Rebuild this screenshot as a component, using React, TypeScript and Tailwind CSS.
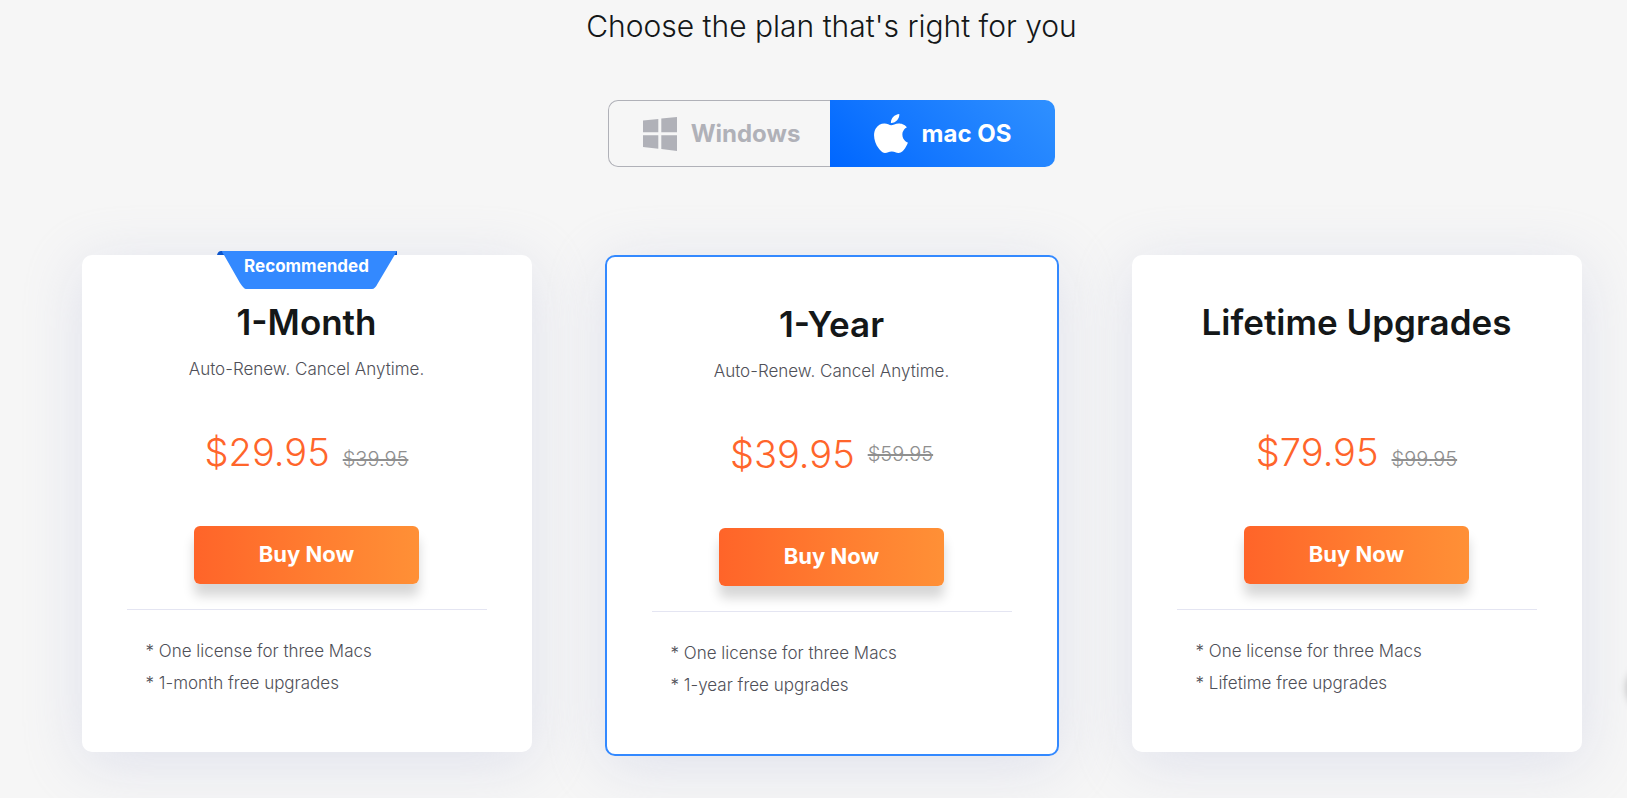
import { useState } from "react";

type Plan = {
  name: string;
  note?: string;
  price: string;
  oldPrice: string;
  perks: string[];
  recommended?: boolean;
  highlighted?: boolean;
};

const plans: Plan[] = [
  {
    name: "1-Month",
    note: "Auto-Renew. Cancel Anytime.",
    price: "$29.95",
    oldPrice: "$39.95",
    perks: ["* One license for three Macs", "* 1-month free upgrades"],
    recommended: true,
  },
  {
    name: "1-Year",
    note: "Auto-Renew. Cancel Anytime.",
    price: "$39.95",
    oldPrice: "$59.95",
    perks: ["* One license for three Macs", "* 1-year free upgrades"],
    highlighted: true,
  },
  {
    name: "Lifetime Upgrades",
    price: "$79.95",
    oldPrice: "$99.95",
    perks: ["* One license for three Macs", "* Lifetime free upgrades"],
  },
];

function WindowsIcon() {
  return (
    <svg viewBox="0 0 34 34" className="h-[34px] w-[34px]" fill="currentColor" aria-hidden="true">
      <path d="M0 3.6 15.3 1.9V15.2H0zM18.3 1.6 34 0V15.2H18.3zM0 18.2H15.3V31.8L0 30zM18.3 18.2H34V34L18.3 32.1z" />
    </svg>
  );
}

function AppleIcon() {
  return (
    <svg viewBox="2.2 0 19.6 24" className="h-[39px] w-[34px]" preserveAspectRatio="none" fill="currentColor" aria-hidden="true">
      <path d="M12.152 6.896c-.948 0-2.415-1.078-3.96-1.04-2.04.027-3.91 1.183-4.961 3.014-2.117 3.675-.546 9.103 1.519 12.09 1.013 1.454 2.208 3.09 3.792 3.039 1.52-.065 2.09-.987 3.935-.987 1.831 0 2.35.987 3.96.948 1.637-.026 2.676-1.48 3.676-2.948 1.156-1.688 1.636-3.325 1.662-3.415-.039-.013-3.182-1.221-3.22-4.857-.026-3.04 2.48-4.494 2.597-4.559-1.429-2.09-3.623-2.324-4.39-2.376-2-.156-3.675 1.09-4.61 1.09zM15.53 3.83c.843-1.012 1.4-2.427 1.245-3.83-1.207.052-2.662.805-3.532 1.818-.78.896-1.454 2.338-1.273 3.714 1.338.104 2.715-.688 3.559-1.701" />
    </svg>
  );
}

function Ribbon() {
  return (
    <div className="absolute -top-1 left-1/2 h-[38px] w-[180px] -translate-x-1/2">
      <svg viewBox="0 0 180 38" className="absolute inset-0 h-full w-full" aria-hidden="true">
        <path d="M0 4Q1 0 4 0H10V4zM172 0H180V4H172z" fill="#0b55cc" />
        <path d="M5 0H180L161 32Q158 38 155 38H29Q27 38 23 32L7 4Q5 2 5 0z" fill="#3389ff" />
        <path d="M177.5 4H180V0z" fill="#0b55cc" />
      </svg>
      <span className="relative block text-center text-[17px] leading-[30px] font-bold text-white">Recommended</span>
    </div>
  );
}

function PlanCard({ plan }: { plan: Plan }) {
  return (
    <article
      className={
        "relative flex flex-col items-center rounded-[10px] bg-white pt-[45px] pb-[53px] shadow-[0_10px_60px_rgba(195,200,225,0.45)] " +
        (plan.highlighted ? "w-[454px] border-2 border-[#3389ff]" : "w-[450px]")
      }
    >
      {plan.recommended && <Ribbon />}
      <h2 className="text-[35px] leading-[44px] font-semibold text-[#141718]">{plan.name}</h2>
      <p className="mt-[13px] h-6 text-[17px] leading-6 font-light text-[#4f5058]">{plan.note}</p>
      <div className={"mt-[47px] flex gap-[13px] " + (plan.highlighted ? "items-center" : "items-baseline")}>
        <span className="text-[38px] leading-[48px] font-light text-[#ff652b]">{plan.price}</span>
        <s className="text-[20px] leading-6 font-light text-[#8f8f8f]">{plan.oldPrice}</s>
      </div>
      <button
        type="button"
        className="mt-[50px] h-[58px] w-[225px] cursor-pointer rounded-md bg-linear-to-r from-[#ff6429] to-[#ff9036] pb-0.5 text-[22px] leading-7 font-bold text-white shadow-[0_12px_12px_rgba(0,0,0,0.16)]"
      >
        Buy Now
      </button>
      <div className="mt-[25px] w-[360px] border-t border-[#e4e5f2] px-[19px] pt-[25px]">
        <ul className="text-[17px] leading-8 font-light text-[#4f5058]">
          {plan.perks.map((perk) => (
            <li key={perk}>{perk}</li>
          ))}
        </ul>
      </div>
    </article>
  );
}

export default function App() {
  const [platform, setPlatform] = useState("mac");
  const active = "bg-linear-45 from-[#0066ff] to-[#2f90ff] text-white";
  const idle = "border border-[#b0b1b8] text-[#b0b1b8]";

  return (
    <main className="relative flex min-h-screen flex-col items-center overflow-hidden bg-[#f6f6f6] pt-[6px] pr-2 pb-10 pl-11 font-['Inter','Noto_Sans',sans-serif]">
      <h1 className="text-[30px] leading-10 font-light text-[#141718]">Choose the plan that's right for you</h1>

      <div className="mt-[54px] flex h-[67px]">
        <button
          type="button"
          aria-pressed={platform === "windows"}
          onClick={() => setPlatform("windows")}
          className={
            "flex w-[222px] cursor-pointer items-center justify-center gap-[14px] rounded-l-[10px] pl-1 text-[24px] leading-8 font-bold " +
            (platform === "windows" ? active : idle + " border-r-0")
          }
        >
          <WindowsIcon />
          Windows
        </button>
        <button
          type="button"
          aria-pressed={platform === "mac"}
          onClick={() => setPlatform("mac")}
          className={
            "flex w-[225px] cursor-pointer items-center justify-center gap-[14px] rounded-r-[10px] text-[24px] leading-8 font-bold " +
            (platform === "mac" ? active : idle + " border-l-0")
          }
        >
          <AppleIcon />
          mac OS
        </button>
      </div>

      <section className="mt-[88px] grid w-full grid-cols-3 items-start justify-items-center">
        {plans.map((plan) => (
          <PlanCard key={plan.name} plan={plan} />
        ))}
      </section>

      <div className="absolute top-[666px] left-full h-11 w-11 rounded-full shadow-[0_0_8px_rgba(0,0,0,0.25)]" aria-hidden="true" />
    </main>
  );
}
